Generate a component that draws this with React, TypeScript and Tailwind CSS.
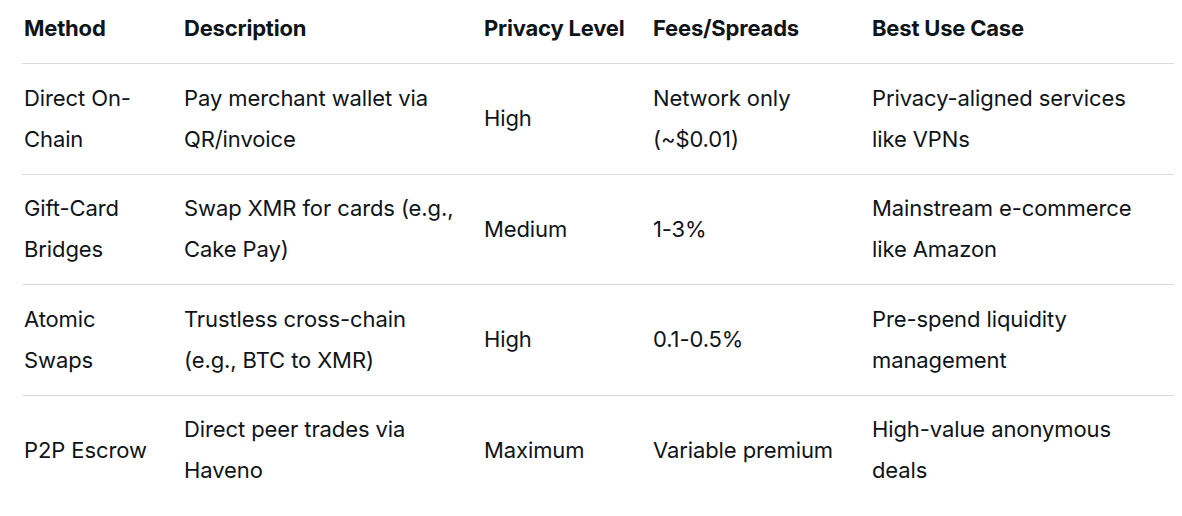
const headers = ['Method', 'Description', 'Privacy Level', 'Fees/Spreads', 'Best Use Case'];

const rows: string[][] = [
  ['Direct On-Chain', 'Pay merchant wallet via QR/invoice', 'High', 'Network only (~$0.01)', 'Privacy-aligned services like VPNs'],
  ['Gift-Card Bridges', 'Swap XMR for cards (e.g., Cake Pay)', 'Medium', '1-3%', 'Mainstream e-commerce like Amazon'],
  ['Atomic Swaps', 'Trustless cross-chain (e.g., BTC to XMR)', 'High', '0.1-0.5%', 'Pre-spend liquidity management'],
  ['P2P Escrow', 'Direct peer trades via Haveno', 'Maximum', 'Variable premium', 'High-value anonymous deals'],
];

const cols = 'grid grid-cols-[160px_300px_169px_219px_1fr]';
const cellPad = ['pr-[14px]', 'pr-[23px]', 'pr-[14px]', 'pr-[14px]', 'pr-[14px]'];

function App() {
  return (
    <div className="min-h-screen bg-white text-[#0f1419]" style={{ fontFamily: 'Inter, "Noto Sans", sans-serif' }}>
      <div className="pl-[22px] pr-[8px]">
        <div className={`${cols} border-b border-[#dcdcdc] pt-[8px] pb-[14px] text-[22px] leading-[41px] font-bold tracking-[-0.2px]`}>
          {headers.map((h) => (
            <div key={h} className="pl-[2px] whitespace-nowrap">{h}</div>
          ))}
        </div>
        {rows.map((r, i) => (
          <div
            key={i}
            className={`${cols} items-center py-[13.75px] text-[22px] leading-[41px] tracking-[-0.1px] ${i < rows.length - 1 ? 'border-b border-[#dcdcdc]' : ''}`}
          >
            {r.map((c, j) => (
              <div key={j} className={`pl-[2px] ${cellPad[j]}`}>{c}</div>
            ))}
          </div>
        ))}
      </div>
    </div>
  );
}

export default App;
